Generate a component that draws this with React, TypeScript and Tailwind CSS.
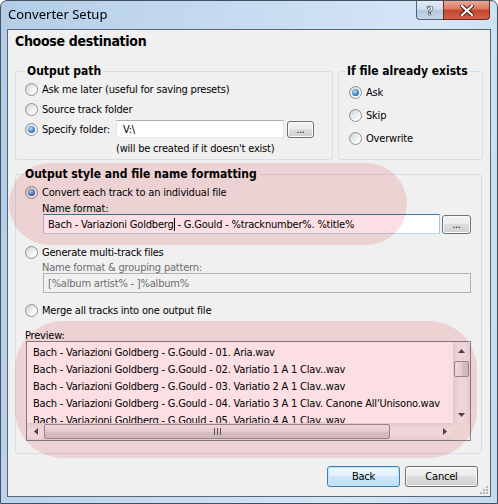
import type { ReactNode } from "react";

function Radio({ checked = false, children }: { checked?: boolean; children: ReactNode }) {
  return (
    <div className="flex items-center gap-[4px]">
      <span className="flex h-[13px] w-[13px] shrink-0 items-center justify-center rounded-full border border-[#8e8f8f] bg-[linear-gradient(135deg,#cfcfcf,#f4f4f4_60%,#ffffff)]">
        {checked && (
          <span className="h-[7px] w-[7px] rounded-full bg-[radial-gradient(circle_at_40%_35%,#b6e0fd,#2f74c4_65%,#1b4e92)]" />
        )}
      </span>
      <span>{children}</span>
    </div>
  );
}

function Btn({ children, isDefault = false, className = "" }: { children: ReactNode; isDefault?: boolean; className?: string }) {
  return (
    <div
      className={
        isDefault
          ? `flex items-center justify-center rounded-[3px] border border-[#3c7fb1] bg-[linear-gradient(180deg,#eef7fd_0%,#e0f0fb_50%,#cfe7f8_50%,#c1dff4_100%)] shadow-[inset_0_0_0_1px_#bfe3fb] ${className}`
          : `flex items-center justify-center rounded-[3px] border border-[#707070] bg-[linear-gradient(180deg,#f2f2f2_0%,#ebebeb_50%,#dddddd_50%,#cfcfcf_100%)] shadow-[inset_0_0_0_1px_#fcfcfc] ${className}`
      }
    >
      {children}
    </div>
  );
}

function ArrowUp() {
  return (
    <svg width="7" height="4" viewBox="0 0 7 4">
      <path d="M0 4 L3.5 0 L7 4 Z" fill="#4d4d4d" />
    </svg>
  );
}

function ArrowDown() {
  return (
    <svg width="7" height="4" viewBox="0 0 7 4">
      <path d="M0 0 L3.5 4 L7 0 Z" fill="#4d4d4d" />
    </svg>
  );
}

function ArrowLeft() {
  return (
    <svg width="4" height="7" viewBox="0 0 4 7">
      <path d="M4 0 L0 3.5 L4 7 Z" fill="#4d4d4d" />
    </svg>
  );
}

function ArrowRight() {
  return (
    <svg width="4" height="7" viewBox="0 0 4 7">
      <path d="M0 0 L4 3.5 L0 7 Z" fill="#4d4d4d" />
    </svg>
  );
}

const previewRows = [
  "Bach - Variazioni Goldberg - G.Gould - 01. Aria.wav",
  "Bach - Variazioni Goldberg - G.Gould - 02. Variatio 1 A 1 Clav..wav",
  "Bach - Variazioni Goldberg - G.Gould - 03. Variatio 2 A 1 Clav..wav",
  "Bach - Variazioni Goldberg - G.Gould - 04. Variatio 3 A 1 Clav. Canone All'Unisono.wav",
  "Bach - Variazioni Goldberg - G.Gould - 05. Variatio 4 A 1 Clav..wav",
];

export default function App() {
  return (
    <div className="relative h-[504px] w-[498px] overflow-hidden rounded-t-[7px] border border-[#44505e] bg-[linear-gradient(100deg,#b3cde8_0%,#c6dbf1_40%,#d5e6f6_75%,#c4daf0_100%)] text-[11px] leading-[13px] tracking-[-0.2px] text-black font-['DejaVu_Sans_Condensed','DejaVu_Sans',sans-serif]">
      {/* title bar */}
      <div className="flex h-[28px] items-start">
        <div className="pl-[7px] pt-[5px] text-[13px] leading-[16px] tracking-normal font-['Noto_Sans','Open_Sans',sans-serif]">Converter Setup</div>
        <div className="ml-auto mr-[7px] flex">
          <div className="flex h-[19px] w-[27px] items-center justify-center rounded-bl-[4px] border border-t-0 border-r-0 border-[#50647c] bg-[linear-gradient(180deg,#e3ecf6_0%,#cfdcea_50%,#b3c6db_50%,#c5d6e8_100%)]">
            <span className="text-[13px] font-bold leading-[13px] text-white [-webkit-text-stroke:0.6px_#2d3a4a] font-['DejaVu_Sans',sans-serif]">?</span>
          </div>
          <div className="flex h-[19px] w-[47px] items-center justify-center rounded-br-[4px] border border-t-0 border-[#6b2a20] bg-[linear-gradient(180deg,#eaa899_0%,#d9785f_45%,#c4452c_50%,#d2604a_100%)]">
            <svg width="14" height="11" viewBox="0 0 14 11">
              <path d="M2 1 L12 10 M12 1 L2 10" stroke="#3a1a14" strokeWidth="4" strokeLinecap="square" />
              <path d="M2 1 L12 10 M12 1 L2 10" stroke="#ffffff" strokeWidth="2.2" strokeLinecap="square" />
            </svg>
          </div>
        </div>
      </div>

      {/* client area */}
      <div className="relative mx-[6px] flex h-[468px] flex-col border border-[#5a6673] bg-[#f0f0f0]">
        <div className="h-[34px] pl-[7px] pt-[3px] text-[14px] font-bold leading-[17px] tracking-[-0.3px]">Choose destination</div>

        <div className="mx-[7px] flex gap-[5px]">
          <fieldset className="w-[318px] rounded-[3px] border border-[#d5dfe5] pb-[2px] pl-[9px]">
            <legend className="px-[2px] text-[12px] font-bold leading-[14px] tracking-normal">Output path</legend>
            <div className="mt-[1px] flex h-[20px] items-center">
              <Radio>Ask me later (useful for saving presets)</Radio>
            </div>
            <div className="flex h-[20px] items-center">
              <Radio>Source track folder</Radio>
            </div>
            <div className="flex h-[20px] items-center">
              <div className="w-[91px]">
                <Radio checked>Specify folder:</Radio>
              </div>
              <div className="flex h-[18px] w-[168px] items-center border border-[#abadb3] border-x-[#e2e3ea] border-b-[#e3e9ef] bg-white pl-[6px]">V:\</div>
              <Btn className="ml-[3px] h-[17px] w-[27px] text-[10px]">...</Btn>
            </div>
            <div className="flex h-[18px] items-center pl-[91px]">(will be created if it doesn't exist)</div>
          </fieldset>

          <fieldset className="flex-1 rounded-[3px] border border-[#d5dfe5] pb-[2px] pl-[10px]">
            <legend className="-ml-[4px] px-[2px] text-[12px] font-bold leading-[14px] tracking-normal">If file already exists</legend>
            <div className="mt-[3px] flex h-[23px] items-center">
              <Radio checked>Ask</Radio>
            </div>
            <div className="flex h-[23px] items-center">
              <Radio>Skip</Radio>
            </div>
            <div className="flex h-[22px] items-center">
              <Radio>Overwrite</Radio>
            </div>
          </fieldset>
        </div>

        <fieldset className="mx-[7px] mt-[7px] mr-[8px] rounded-[3px] border border-[#d5dfe5] pb-[12px] pl-[9px] pr-[10px]">
          <legend className="-ml-[2px] px-[2px] text-[12px] font-bold leading-[14px] tracking-normal">Output style and file name formatting</legend>
          <div className="mt-[1px] flex h-[20px] items-center">
            <Radio checked>Convert each track to an individual file</Radio>
          </div>
          <div className="flex h-[12px] items-center pl-[17px]">Name format:</div>
          <div className="flex h-[20px] items-center pl-[18px]">
            <div className="flex h-[20px] flex-1 items-center border border-[#3d7bad] border-x-[#a4c9e3] border-b-[#b7d9ed] bg-white pl-[4px]">
              <span>Bach - Variazioni Goldberg</span>
              <span className="h-[13px] w-px bg-black" />
              <span>&nbsp;- G.Gould - %tracknumber%. %title%</span>
            </div>
            <Btn className="ml-[2px] h-[19px] w-[29px] text-[10px]">...</Btn>
          </div>
          <div className="mt-[8px] flex h-[20px] items-center">
            <Radio>Generate multi-track files</Radio>
          </div>
          <div className="flex h-[11px] items-center pl-[17px] text-[#6d6d6d]">Name format &amp; grouping pattern:</div>
          <div className="flex h-[20px] items-center pl-[18px]">
            <div className="flex h-[20px] flex-1 items-center border border-[#adb2b5] pl-[4px] text-[#6d6d6d]">[%album artist% - ]%album%</div>
          </div>
          <div className="mt-[7px] flex h-[20px] items-center">
            <Radio>Merge all tracks into one output file</Radio>
          </div>
          <div className="mt-[9px] flex h-[12px] items-center">Preview:</div>
          <div className="ml-[1px] flex h-[100px] flex-col border border-[#828790] bg-white">
            <div className="flex min-h-0 flex-1">
              <div className="min-w-0 flex-1 overflow-hidden whitespace-nowrap pl-[6px] pt-[2px]">
                {previewRows.map((row) => (
                  <div key={row} className="flex h-[17px] items-center">
                    {row}
                  </div>
                ))}
              </div>
              <div className="flex w-[17px] flex-col bg-[linear-gradient(90deg,#e3e3e3,#f3f3f3_30%,#f3f3f3_70%,#e8e8e8)]">
                <div className="flex h-[17px] items-center justify-center">
                  <ArrowUp />
                </div>
                <div className="mx-[1px] mt-[2px] flex h-[16px] flex-col items-center justify-center gap-[2px] rounded-[2px] border border-[#979797] bg-[linear-gradient(90deg,#f6f6f6,#e8e8e8_50%,#dadada_50%,#d2d2d2)]" />
                <div className="flex-1" />
                <div className="flex h-[17px] items-center justify-center">
                  <ArrowDown />
                </div>
              </div>
            </div>
            <div className="flex h-[17px]">
              <div className="flex flex-1 bg-[linear-gradient(180deg,#e3e3e3,#f3f3f3_30%,#f3f3f3_70%,#e8e8e8)]">
                <div className="flex w-[17px] items-center justify-center">
                  <ArrowLeft />
                </div>
                <div className="my-[1px] flex w-[346px] items-center justify-center gap-[2px] rounded-[2px] border border-[#979797] bg-[linear-gradient(180deg,#f6f6f6,#e8e8e8_50%,#dadada_50%,#d2d2d2)]">
                  <span className="h-[7px] w-px bg-[#5f5f5f]" />
                  <span className="h-[7px] w-px bg-[#5f5f5f]" />
                  <span className="h-[7px] w-px bg-[#5f5f5f]" />
                </div>
                <div className="flex-1" />
                <div className="flex w-[17px] items-center justify-center">
                  <ArrowRight />
                </div>
              </div>
              <div className="w-[17px] bg-[#f0f0f0]" />
            </div>
          </div>
        </fieldset>

        <div className="mr-[12px] mt-[12px] flex justify-end gap-[5px]">
          <Btn isDefault className="h-[21px] w-[73px]">Back</Btn>
          <Btn className="h-[21px] w-[73px]">Cancel</Btn>
        </div>

        {/* size grip */}
        <div className="absolute bottom-[2px] right-[2px] grid grid-cols-3 gap-[1px]">
          <span className="h-[2px] w-[2px]" />
          <span className="h-[2px] w-[2px]" />
          <span className="h-[2px] w-[2px] bg-[#b5b5b5]" />
          <span className="h-[2px] w-[2px]" />
          <span className="h-[2px] w-[2px] bg-[#b5b5b5]" />
          <span className="h-[2px] w-[2px] bg-[#b5b5b5]" />
          <span className="h-[2px] w-[2px] bg-[#b5b5b5]" />
          <span className="h-[2px] w-[2px] bg-[#b5b5b5]" />
          <span className="h-[2px] w-[2px] bg-[#b5b5b5]" />
        </div>
      </div>

      {/* pink highlight annotations */}
      <div className="pointer-events-none absolute left-[8px] top-[162px] h-[82px] w-[398px] rounded-full bg-[#fcdfe2] mix-blend-multiply" />
      <div className="pointer-events-none absolute left-[14px] top-[320px] h-[137px] w-[462px] rounded-[48px] bg-[#fcdfe2] mix-blend-multiply" />
    </div>
  );
}
